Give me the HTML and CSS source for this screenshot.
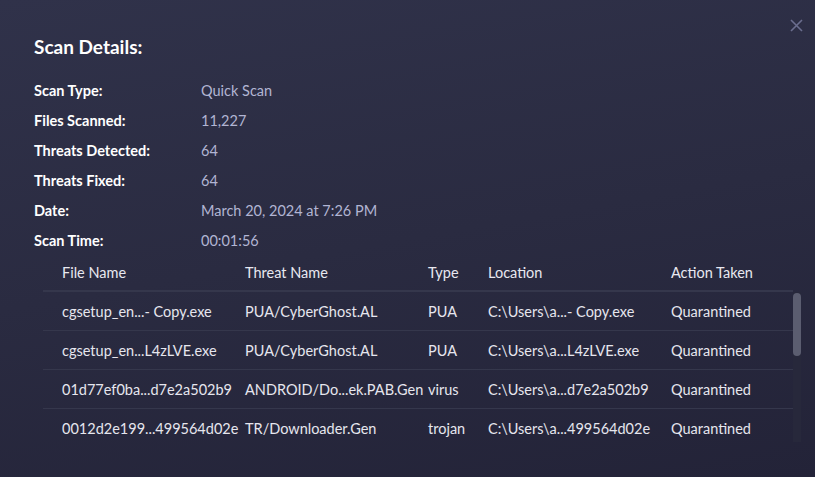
FILE: index.html
```html
<!DOCTYPE html>
<html lang="en">
<head>
    <meta charset="UTF-8">
    <meta name="viewport" content="width=device-width, initial-scale=1.0">
    <title>scan-details</title>
    <link rel="stylesheet" href="styles.css">
</head>
<body>
    <div class="modal">
        <button class="close-button" aria-label="Close">
            <svg width="13" height="13" viewBox="0 0 13 13">
                <path d="M1 1 L12 12 M12 1 L1 12" stroke="#6b6e8f" stroke-width="1.6" fill="none"/>
            </svg>
        </button>
        <h2 class="modal-title">Scan Details:</h2>

        <div class="details">
            <div class="detail-row"><span class="detail-label">Scan Type:</span><span class="detail-value">Quick Scan</span></div>
            <div class="detail-row"><span class="detail-label">Files Scanned:</span><span class="detail-value">11,227</span></div>
            <div class="detail-row"><span class="detail-label">Threats Detected:</span><span class="detail-value">64</span></div>
            <div class="detail-row"><span class="detail-label">Threats Fixed:</span><span class="detail-value">64</span></div>
            <div class="detail-row"><span class="detail-label">Date:</span><span class="detail-value">March 20, 2024 at 7:26 PM</span></div>
            <div class="detail-row"><span class="detail-label">Scan Time:</span><span class="detail-value">00:01:56</span></div>
        </div>

        <div class="threat-table">
            <div class="table-head">
                <div>File Name</div>
                <div>Threat Name</div>
                <div>Type</div>
                <div>Location</div>
                <div>Action Taken</div>
            </div>
            <div class="table-scroll">
                <div class="table-body">
                    <div class="table-row">
                        <div>cgsetup_en...- Copy.exe</div>
                        <div>PUA/CyberGhost.AL</div>
                        <div>PUA</div>
                        <div>C:\Users\a...- Copy.exe</div>
                        <div>Quarantined</div>
                    </div>
                    <div class="table-row">
                        <div>cgsetup_en...L4zLVE.exe</div>
                        <div>PUA/CyberGhost.AL</div>
                        <div>PUA</div>
                        <div>C:\Users\a...L4zLVE.exe</div>
                        <div>Quarantined</div>
                    </div>
                    <div class="table-row">
                        <div>01d77ef0ba...d7e2a502b9</div>
                        <div>ANDROID/Do...ek.PAB.Gen</div>
                        <div>virus</div>
                        <div>C:\Users\a...d7e2a502b9</div>
                        <div>Quarantined</div>
                    </div>
                    <div class="table-row">
                        <div>0012d2e199...499564d02e</div>
                        <div>TR/Downloader.Gen</div>
                        <div>trojan</div>
                        <div>C:\Users\a...499564d02e</div>
                        <div>Quarantined</div>
                    </div>
                </div>
                <div class="scroll-track">
                    <div class="scroll-thumb"></div>
                </div>
            </div>
        </div>
    </div>
</body>
</html>
```

FILE: styles.css
```css
html, body{
    margin: 0;
    height: 100%;
}
body{
    font-family: Lato, "Open Sans", sans-serif;
    background: linear-gradient(170deg, #30324a 0%, #2a2b41 50%, #232338 100%);
    color: #e6e6ee;
}
.modal{
    position: relative;
    height: 477px;
    box-sizing: border-box;
    padding: 36px 14px 0 34px;
}
.close-button{
    position: absolute;
    top: 19px;
    right: 12px;
    padding: 0;
    border: none;
    background: none;
    width: 13px;
    height: 13px;
    cursor: pointer;
}
.modal-title{
    margin: 0 0 17px 0;
    font-size: 19px;
    line-height: 22px;
    font-weight: 700;
    color: #fff;
}

/***************** -details- *******************/

.detail-row{
    display: flex;
    height: 30px;
    align-items: center;
    font-size: 14.5px;
}
.detail-label{
    width: 167px;
    font-weight: 700;
    color: #fff;
}
.detail-value{
    color: #b2b5d3;
}

/***************** -table- *******************/

.threat-table{
    margin-left: 9px;
    font-size: 14.5px;
}
.table-head,
.table-row{
    display: grid;
    grid-template-columns: 183px 183px 60px 183px 1fr;
    padding-left: 19px;
    align-items: center;
    white-space: nowrap;
}
.table-head{
    height: 35px;
    border-bottom: 2px solid #35374c;
    margin-right: 8px;
    color: #e8e8f0;
}
.table-scroll{
    display: flex;
    height: 150px;
}
.table-body{
    flex: 1;
    overflow: hidden;
}
.table-row{
    height: 38px;
    border-bottom: 1px solid #35374c;
    color: #e6e6ee;
}
.scroll-track{
    width: 8px;
    background: #27283b;
}
.scroll-thumb{
    height: 63px;
    margin-top: 1px;
    background: #5b5d70;
    border-radius: 4px;
}
```
